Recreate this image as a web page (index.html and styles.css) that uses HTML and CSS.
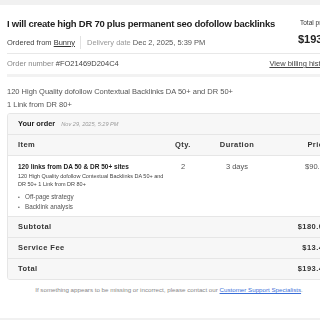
FILE: index.html
```html
<!DOCTYPE html>
<html lang="en">
<head>
    <meta charset="UTF-8">
    <meta name="viewport" content="width=device-width, initial-scale=1.0">
    <meta name="format-detection" content="telephone=no">
    <title>Order details</title>
    <link rel="stylesheet" href="styles.css">
</head>
<body>
    <div class="page">
        <div class="order-head">
            <div class="head-left">
                <h1>I will create high DR 70 plus permanent seo dofollow backlinks</h1>
                <div class="meta">
                    <span class="from">Ordered from <a href="#">Bunny</a></span>
                    <span class="sep"></span>
                    <span class="delivery">Delivery date <b>Dec 2, 2025, 5:39 PM</b></span>
                </div>
            </div>
            <div class="head-right">
                <div class="total-label">Total price</div>
                <div class="total-value">$193.40</div>
            </div>
        </div>

        <div class="order-number">
            <span>Order number <b>#FO21469D204C4</b></span>
            <a href="#">View billing history</a>
        </div>

        <p class="description">120 High Quality dofollow Contextual Backlinks DA 50+ and DR 50+<br>1 Link from DR 80+</p>

        <div class="card">
            <div class="card-title">Your order <span class="date">Nov 29, 2025, 5:29 PM</span></div>

            <div class="row row-head">
                <div>Item</div>
                <div class="center">Qty.</div>
                <div class="center">Duration</div>
                <div class="price">Price</div>
            </div>

            <div class="row row-item">
                <div class="item">
                    <div class="item-name">120 links from DA 50 &amp; DR 50+ sites</div>
                    <div class="item-desc">120 High Quality dofollow Contextual Backlinks DA 50+ and DR 50+ 1 Link from DR 80+</div>
                    <ul>
                        <li>Off-page strategy</li>
                        <li>Backlink analysis</li>
                    </ul>
                </div>
                <div class="center">2</div>
                <div class="center">3 days</div>
                <div class="price">$90.00</div>
            </div>

            <div class="sum-row"><span>Subtotal</span><span>$180.00</span></div>
            <div class="sum-row"><span>Service Fee</span><span>$13.40</span></div>
            <div class="sum-row"><span>Total</span><span>$193.40</span></div>
        </div>

        <p class="footer-note">If something appears to be missing or incorrect, please contact our <a href="#">Customer Support Specialists</a>.</p>
    </div>
</body>
</html>
```

FILE: styles.css
```css
* {
    margin: 0;
    padding: 0;
    box-sizing: border-box;
}

html, body {
    overflow: hidden;
}

body {
    font-family: "Liberation Sans", Arial, sans-serif;
    background: #f1f1f1;
    color: #333;
    padding-top: 5px;
    width: 346px;
}

a {
    color: inherit;
}

.page {
    background: white;
    padding: 13px 7px 0;
    height: 313px;
}

/* keep small text grey, no coloured fringes */
.order-head,
.order-number,
.description,
.card {
    filter: grayscale(100%);
}

.order-head {
    display: flex;
    justify-content: space-between;
    padding-bottom: 4px;
    border-bottom: 1px solid #e8e8e8;
}

.order-head h1 {
    font-size: 9.5px;
    line-height: 12px;
    font-weight: 600;
    letter-spacing: -0.25px;
    color: #222;
    white-space: nowrap;
}

.meta {
    display: flex;
    align-items: center;
    font-size: 7.5px;
    line-height: 12px;
    margin-top: 6px;
}

.meta .from {
    color: #444;
}

.meta .from a {
    color: #333;
}

.meta .sep {
    width: 1px;
    height: 13px;
    background: #e2e2e2;
    margin: 0 6px 0 5px;
}

.meta .delivery {
    color: #999;
}

.meta .delivery b {
    font-weight: normal;
    color: #555;
}

.head-right {
    margin-left: 20px;
    width: 39px;
}

.total-label {
    font-size: 6.5px;
    line-height: 9px;
    color: #333;
    white-space: nowrap;
}

.total-value {
    font-size: 11px;
    line-height: 13px;
    font-weight: bold;
    color: #222;
    margin-top: 6px;
    margin-left: -2px;
}

.order-number {
    display: flex;
    justify-content: space-between;
    font-size: 7.5px;
    line-height: 12px;
    color: #888;
    padding: 4px 0 4px;
    border-bottom: 3px solid #f2f2f2;
}

.order-number b {
    font-weight: normal;
    color: #444;
}

.order-number a {
    color: #444;
    margin-right: 8px;
}

.description {
    font-size: 7.5px;
    line-height: 13px;
    color: #555;
    margin: 8px 0 2px;
}

.card {
    border: 1px solid #e6e6e6;
    border-radius: 3px;
    overflow: hidden;
}

.card-title {
    background: #f7f7f7;
    font-size: 7.4px;
    font-weight: bold;
    color: #222;
    line-height: 19px;
    padding: 0 10px;
    border-bottom: 1px solid #e6e6e6;
}

.card-title .date {
    font-size: 5.6px;
    font-weight: normal;
    font-style: italic;
    color: #999;
    margin-left: 4px;
}

.row {
    display: grid;
    grid-template-columns: 150px 30px 78px 1fr;
    padding: 0 10px;
}

.center {
    text-align: center;
}

.price {
    text-align: right;
}

.row-head {
    background: #f7f7f7;
    font-size: 7.5px;
    letter-spacing: 0.45px;
    font-weight: bold;
    color: #333;
    line-height: 20px;
    border-bottom: 1px solid #e6e6e6;
}

.row-item {
    font-size: 7.5px;
    line-height: 9px;
    color: #555;
    padding-top: 6px;
    height: 61px;
    border-bottom: 1px solid #e6e6e6;
}

.item-name {
    font-size: 6.5px;
    font-weight: bold;
    color: #222;
    line-height: 9px;
}

.item-desc {
    font-size: 5.5px;
    line-height: 8px;
    color: #444;
    margin-top: 1px;
}

.row-item ul {
    list-style: none;
    margin-top: 4px;
    font-size: 6.3px;
    line-height: 10px;
    color: #555;
}

.row-item li::before {
    content: "•";
    display: inline-block;
    width: 7px;
    font-size: 5px;
}

.sum-row {
    display: flex;
    justify-content: space-between;
    background: #f7f7f7;
    font-size: 7.5px;
    letter-spacing: 0.45px;
    font-weight: bold;
    color: #333;
    line-height: 20px;
    padding: 0 10px;
    border-bottom: 1px solid #e6e6e6;
}

.sum-row:last-child {
    border-bottom: none;
}

.footer-note {
    font-size: 6.2px;
    color: #888;
    text-align: center;
    margin-top: 6px;
    padding-right: 8px;
}

.footer-note a {
    color: #3b6fd8;
}
```
